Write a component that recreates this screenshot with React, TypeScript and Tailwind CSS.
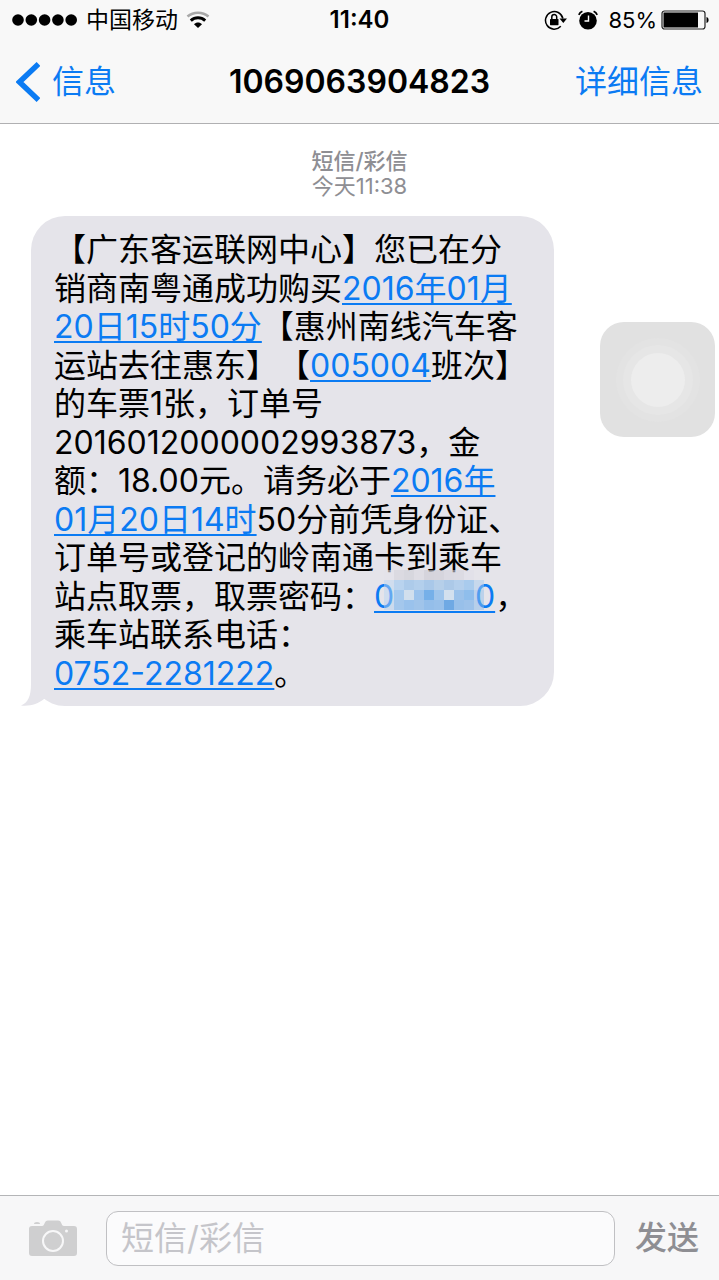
import type { ReactNode } from 'react'

function DataLink({ href, children }: { href: string; children: ReactNode }) {
  return (
    <a href={href} className="text-[#0b7bf3] underline decoration-2 underline-offset-3">
      {children}
    </a>
  )
}

// Pixel mosaic laid over the middle digits of the pick-up code
const mosaic = [
  ['#e3e3ea', '#d3d3da', '#cdced6', '#d8d8df', '#c9cad2', '#cbccd4', '#d4d4dc', '#d6d6dd', '#e0e0e7', '#e5e4ea'],
  ['#bcd6f1', '#b9d3ee', '#adcbea', '#b3cfec', '#a9c8e9', '#b6cfe9', '#acc9e8', '#b4cfec', '#a9cbed', '#a9cbed'],
  ['#b9d6f2', '#a6caee', '#d1dfed', '#9cc3ec', '#76b0e9', '#9fc5ec', '#d3e0ee', '#9cc2ea', '#8fbeec', '#94c0ec'],
  ['#b4d0ef', '#a4c7ec', '#9ac2ec', '#a0c4ea', '#94beea', '#98c0ea', '#6fa9e4', '#98c0ea', '#9dc2ea', '#8ab9ea'],
]

function cellOpacity(x: number, y: number) {
  if (y === 0) return 0.6
  return x === 0 || x === 9 ? 0.5 : 1
}

function Mosaic() {
  return (
    <svg viewBox="0 0 100 40" className="absolute bottom-1.5 left-[10px] h-10 w-[100px]" aria-hidden="true">
      {mosaic.map((row, y) =>
        row.map((fill, x) => (
          <rect
            key={`${x}-${y}`}
            x={x * 10}
            y={y * 10}
            width="10"
            height="10"
            fill={fill}
            opacity={cellOpacity(x, y)}
          />
        )),
      )}
    </svg>
  )
}

function StatusBar() {
  return (
    <div className="grid h-10 grid-cols-[1fr_auto_1fr] items-center px-3 leading-8">
      <div className="flex items-center">
        <svg viewBox="0 0 66 12" className="h-3 w-[66px]" aria-label="信号">
          {[0, 1, 2, 3, 4].map((i) => (
            <circle key={i} cx={6 + i * 13.3} cy="6" r="5.8" />
          ))}
        </svg>
        <span className="ml-2 text-[23px]">中国移动</span>
        <svg viewBox="0 0 24 18" className="ml-2 h-[18px] w-6" fill="none" aria-label="Wi-Fi">
          <path d="M1.5 5.5C7.5.4 16.5.4 22.5 5.5" stroke="#a8a8a8" strokeWidth="2.6" />
          <path d="M4.8 9.6c4.2-3.8 10.2-3.8 14.4 0" stroke="#000" strokeWidth="3" />
          <path d="M8 13.2c2.3-2.2 5.7-2.2 8 0L12 17z" fill="#000" />
        </svg>
      </div>
      <span className="text-2xl font-semibold">11:40</span>
      <div className="flex items-center justify-end">
        <svg viewBox="0 0 24 20" className="h-5 w-6" fill="none" aria-label="方向锁定">
          <path d="M16.8 16.3A8.8 8.8 0 1 1 18.9 8.5" stroke="#000" strokeWidth="1.5" />
          <path d="M15.5 8.5h7.5l-3.7 4.5z" fill="#000" />
          <rect x="6" y="9" width="8.5" height="6.2" rx=".6" fill="#000" />
          <path d="M7.8 9V7a2.4 2.4 0 0 1 4.9 0v2" stroke="#000" strokeWidth="1.5" />
        </svg>
        <svg viewBox="0 0 20 20" className="ml-2.5 h-5 w-5" fill="none" aria-label="闹钟">
          <circle cx="10" cy="10.8" r="8.8" fill="#000" />
          <path d="M.8 4.8A7 7 0 0 1 4.4 1.2M19.2 4.8A7 7 0 0 0 15.6 1.2" stroke="#000" strokeWidth="1.8" />
          <path d="M10.5 5.5v5.5H6.5" stroke="#fff" strokeWidth="1.4" />
        </svg>
        <span className="ml-2.5 text-[22px]">85%</span>
        <svg viewBox="0 0 48 20" className="-mr-0.5 ml-1 h-5 w-12" fill="none" aria-label="电量">
          <rect x="1" y="1" width="43" height="18" rx="2.5" stroke="#222" strokeWidth="1.2" />
          <rect x="2.5" y="2.5" width="34.5" height="15" fill="#000" />
          <path d="M45.5 7c2.8.6 2.8 5.4 0 6z" fill="#000" />
        </svg>
      </div>
    </div>
  )
}

function NavBar() {
  return (
    <div className="grid h-[83px] grid-cols-[1fr_auto_1fr] items-center px-4">
      <button type="button" className="flex items-center gap-3 text-[32px] text-[#0b7bf3]">
        <svg viewBox="0 0 24 40" className="h-10 w-6" fill="none" aria-hidden="true">
          <path d="M22.5 2L3.500 20l19 18" stroke="currentColor" strokeWidth="5.5" />
        </svg>
        信息
      </button>
      <h1 className="text-[32px] font-semibold">1069063904823</h1>
      <button type="button" className="justify-self-end text-[32px] text-[#0b7bf3]">
        详细信息
      </button>
    </div>
  )
}

function Message() {
  return (
    <div className="relative ml-[31px] flex min-h-[490px] w-[523px] flex-col justify-between rounded-[34px] bg-[#e5e4ea] px-[23px] pt-[15px] pb-[13px] text-[32px] leading-[38px] whitespace-nowrap">
      <svg viewBox="0 0 32 34" className="absolute bottom-0 -left-[10px] h-[34px] w-8" aria-hidden="true">
        <path d="M10 0v12C10 24 7 31 0 33.5C9 34.5 17 32 23 27L32 24V0z" fill="#e5e4ea" />
      </svg>
      <p>【广东客运联网中心】您已在分</p>
      <p>
        销商南粤通成功购买
        <DataLink href="#departure">2016年01月</DataLink>
      </p>
      <p>
        <DataLink href="#departure">20日15时50分</DataLink>
        【惠州南线汽车客
      </p>
      <p>
        运站去往惠东】【
        <DataLink href="tel:005004">005004</DataLink>
        班次】
      </p>
      <p>的车票1张，订单号</p>
      <p>2016012000002993873，金</p>
      <p>
        额：18.00元。请务必于
        <DataLink href="#pickup">2016年</DataLink>
      </p>
      <p>
        <DataLink href="#pickup">01月20日14时</DataLink>
        50分前凭身份证、
      </p>
      <p>订单号或登记的岭南通卡到乘车</p>
      <p>
        站点取票，取票密码：
        <span className="relative inline-block">
          <DataLink href="#code">000000</DataLink>
          <Mosaic />
        </span>
        ，
      </p>
      <p>乘车站联系电话：</p>
      <p>
        <DataLink href="tel:0752-2281222">0752-2281222</DataLink>。
      </p>
    </div>
  )
}

function AssistiveTouch() {
  return (
    <button
      type="button"
      aria-label="AssistiveTouch"
      className="absolute top-[322px] right-1 flex size-[115px] items-center justify-center rounded-3xl bg-[#e1e1e1]"
    >
      <span className="flex size-[84px] items-center justify-center rounded-full bg-[#e3e3e3]">
        <span className="flex size-[70px] items-center justify-center rounded-full bg-[#e6e6e6]">
          <span className="size-[54px] rounded-full bg-[#ededed]" />
        </span>
      </span>
    </button>
  )
}

function Composer() {
  return (
    <form
      className="flex h-[85px] items-center border-t border-[#b4b5b7] bg-[#f7f7f8] pr-5 pl-7"
      onSubmit={(event) => event.preventDefault()}
    >
      <button type="button" aria-label="相机">
        <svg viewBox="0 0 50 38" className="h-[38px] w-[50px]" aria-hidden="true">
          <path
            d="M4 7h10c3 0 2-5.500 6-5.500h10C34 1.500 33 7 36 7h10q3 0 3 3v24q0 3-3 3H4q-3 0-3-3V10q0-3 3-3z"
            fill="#cfcfd0"
          />
          <path d="M6 5q0-2 3-2t3 2z" fill="#cfcfd0" />
          <circle cx="25" cy="22" r="10" fill="none" stroke="#f7f7f8" strokeWidth="2" />
          <circle cx="38.5" cy="12" r="1.5" fill="#f7f7f8" />
        </svg>
      </button>
      <input
        type="text"
        aria-label="短信/彩信"
        placeholder="短信/彩信"
        className="ml-7 h-[55px] min-w-0 flex-1 rounded-xl border border-[#c0c0c3] bg-[#fbfbfc] px-3.5 text-[33px] outline-none placeholder:text-[#c5c5ca]"
      />
      <button type="submit" className="ml-5 text-[32px] font-medium text-[#8e8e93]">
        发送
      </button>
    </form>
  )
}

export default function App() {
  return (
    <div
      lang="zh-CN"
      className="relative flex min-h-screen flex-col bg-white font-[Inter,'Noto_Sans_CJK_SC',sans-serif] text-black [text-spacing-trim:space-all]"
    >
      <header className="border-b border-[#b0b0b2] bg-[#f8f8f8]">
        <StatusBar />
        <NavBar />
      </header>
      <main className="flex-1">
        <div className="pt-[25px] pb-[17px] text-center text-[22px] leading-[25px] text-[#8e8e93]">
          <p className="font-medium">短信/彩信</p>
          <p>今天11:38</p>
        </div>
        <Message />
      </main>
      <Composer />
      <AssistiveTouch />
    </div>
  )
}
